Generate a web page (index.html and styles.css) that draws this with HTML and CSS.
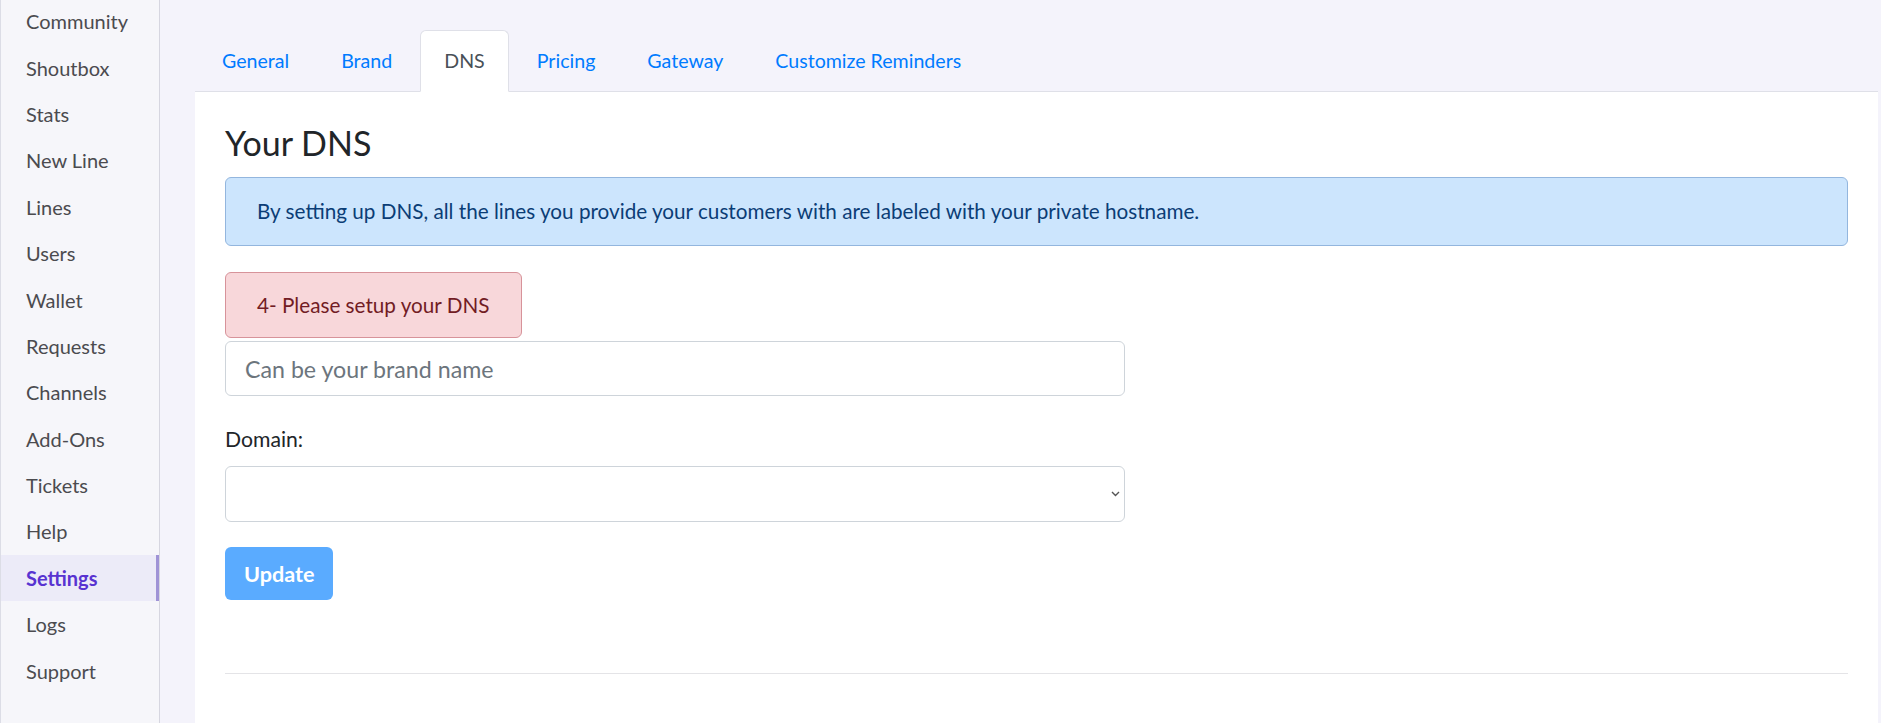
FILE: index.html
```html
<!DOCTYPE html>
<html lang="en">
<head>
  <meta charset="UTF-8">
  <meta name="viewport" content="width=device-width, initial-scale=1.0">
  <title>Settings - DNS</title>
  <link rel="stylesheet" href="styles.css">
</head>
<body>
  <aside class="sidebar">
    <ul class="side-menu">
      <li><a href="#">Community</a></li>
      <li><a href="#">Shoutbox</a></li>
      <li><a href="#">Stats</a></li>
      <li><a href="#">New Line</a></li>
      <li><a href="#">Lines</a></li>
      <li><a href="#">Users</a></li>
      <li><a href="#">Wallet</a></li>
      <li><a href="#">Requests</a></li>
      <li><a href="#">Channels</a></li>
      <li><a href="#">Add-Ons</a></li>
      <li><a href="#">Tickets</a></li>
      <li><a href="#">Help</a></li>
      <li class="active"><a href="#">Settings</a></li>
      <li><a href="#">Logs</a></li>
      <li><a href="#">Support</a></li>
    </ul>
  </aside>

  <main class="content">
    <ul class="tabs">
      <li><a href="#">General</a></li>
      <li><a href="#">Brand</a></li>
      <li class="active"><a href="#">DNS</a></li>
      <li><a href="#">Pricing</a></li>
      <li><a href="#">Gateway</a></li>
      <li><a href="#">Customize Reminders</a></li>
    </ul>

    <section class="panel">
      <h2 class="panel-title">Your DNS</h2>
      <div class="alert alert-info">By setting up DNS, all the lines you provide your customers with are labeled with your private hostname.</div>
      <div class="alert alert-danger">4- Please setup your DNS</div>

      <form class="dns-form">
        <input type="text" class="field" placeholder="Can be your brand name">
        <label class="field-label" for="domain">Domain:</label>
        <div class="select-wrap">
          <select id="domain" class="field field-select"></select>
          <svg class="select-arrow" width="9" height="6" viewBox="0 0 9 6">
            <path d="M1 1 L4.5 4.5 L8 1" fill="none" stroke="#555" stroke-width="1.4"/>
          </svg>
        </div>
        <button type="button" class="btn-update" disabled>Update</button>
      </form>

      <hr class="divider">
    </section>
  </main>
</body>
</html>
```
FILE: styles.css
```css
body {
  margin: 0;
  display: flex;
  height: 723px;
  overflow: hidden;
  background-color: #f4f3fb;
  font-family: Lato, "Open Sans", sans-serif;
  color: #212529;
}
a {
  text-decoration: none;
}
.sidebar {
  width: 158px;
  flex-shrink: 0;
  background-color: #f6f6fa;
  border-left: 1px solid #dcdde6;
  border-right: 1px solid #d6d6e0;
}
.side-menu {
  list-style: none;
  margin: -2px 0 0;
  padding: 0;
}
.side-menu li {
  height: 46.4px;
  display: flex;
  align-items: center;
}
.side-menu a {
  padding-left: 25px;
  font-size: 20px;
  color: #4b4b4f;
}
.side-menu li.active {
  background-color: #ecebf8;
  box-shadow: inset -3px 0 0 #9f93d6;
}
.side-menu li.active a {
  color: #5833d1;
  font-weight: bold;
}
.content {
  flex: 1;
  display: flex;
  flex-direction: column;
  padding: 30px 3px 0 35px;
}
.tabs {
  list-style: none;
  display: flex;
  gap: 4px;
  margin: 0;
  padding: 0 0 0 3px;
  border-bottom: 1px solid #dfe0e8;
}
.tabs li {
  margin-bottom: -1px;
}
.tabs a {
  display: block;
  height: 60px;
  line-height: 60px;
  padding: 0 23px;
  font-size: 19.6px;
  color: #007bff;
  border: 1px solid transparent;
  border-radius: 6px 6px 0 0;
}
.tabs li.active a {
  color: #495057;
  background-color: #fff;
  border-color: #dfe0e8 #dfe0e8 #fff;
}
.panel {
  flex: 1;
  background-color: #fff;
  padding: 30px 30px 0;
}
.panel-title {
  margin: 0 0 14px;
  font-size: 34px;
  font-weight: normal;
  line-height: 41px;
  color: #212529;
}
.alert {
  border: 1px solid;
  border-radius: 6px;
  font-size: 20.7px;
}
.alert-info {
  padding: 21px 31px;
  line-height: 25px;
  background-color: #cce5fd;
  border-color: #93b6de;
  color: #0b3d76;
}
.alert-danger {
  display: inline-block;
  margin-top: 26px;
  padding: 20px 31px;
  line-height: 24px;
  background-color: #f8d7da;
  border-color: #d7939a;
  color: #721c24;
}
.dns-form {
  display: flex;
  flex-direction: column;
  align-items: flex-start;
}
.field {
  box-sizing: border-box;
  width: 900px;
  height: 55px;
  margin-top: 3px;
  padding: 0 19px;
  border: 1px solid #ced4da;
  border-radius: 6px;
  font-family: inherit;
  font-size: 23.2px;
  color: #495057;
  background-color: #fff;
}
.field::placeholder {
  color: #6c757d;
}
.field-label {
  margin-top: 28px;
  font-size: 21.2px;
  line-height: 30px;
}
.select-wrap {
  position: relative;
  margin-top: 12px;
}
.field-select {
  height: 56px;
  margin-top: 0;
  appearance: none;
  -webkit-appearance: none;
}
.select-arrow {
  position: absolute;
  right: 5px;
  top: 25px;
}
.btn-update {
  margin-top: 25px;
  height: 53px;
  padding: 0 19px;
  border: none;
  border-radius: 6px;
  background-color: #5aabff;
  color: #fff;
  font-family: inherit;
  font-size: 21.6px;
  font-weight: bold;
}
.divider {
  margin: 73px 0 0;
  border: none;
  border-top: 1px solid #e4e4e7;
}
```
